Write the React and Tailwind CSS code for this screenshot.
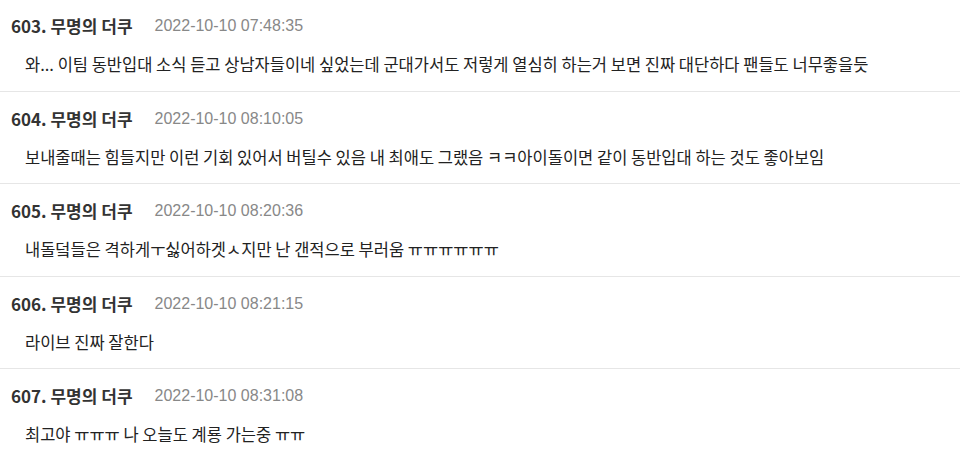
import React from "react";

const rows = [
  { n: "603.", d: "2022-10-10 07:48:35", t: "와... 이팀 동반입대 소식 듣고 상남자들이네 싶었는데 군대가서도 저렇게 열심히 하는거 보면 진짜 대단하다 팬들도 너무좋을듯" },
  { n: "604.", d: "2022-10-10 08:10:05", t: "보내줄때는 힘들지만 이런 기회 있어서 버틸수 있음 내 최애도 그랬음 ㅋㅋ아이돌이면 같이 동반입대 하는 것도 좋아보임" },
  { n: "605.", d: "2022-10-10 08:20:36", t: "내돌덬들은 격하게ㅜ싫어하겟ㅅ지만 난 갠적으로 부러움 ㅠㅠㅠㅠㅠㅠ" },
  { n: "606.", d: "2022-10-10 08:21:15", t: "라이브 진짜 잘한다" },
  { n: "607.", d: "2022-10-10 08:31:08", t: "최고야 ㅠㅠㅠ 나 오늘도 계룡 가는중 ㅠㅠ" },
];

const kr = { fontFamily: '"Noto Sans CJK KR", "Noto Sans", sans-serif' };
const lat = { fontFamily: '"Liberation Sans", Arial, sans-serif' };

export default function App() {
  return (
    <div className="w-[960px] h-[461px] overflow-hidden bg-white">
      {rows.map((r, i) => (
        <div
          key={r.n}
          className={`pb-[15.5px] ${i === rows.length - 1 ? "" : "border-b border-[#e6e6e6]"} ${i === 0 ? "pt-[16px]" : "pt-[17px]"}`}
        >
          <div className="flex items-center h-5 pl-[11px]">
            <span className="text-[17px] font-bold text-[#333333] leading-5" style={kr}>
              {r.n} 무명의 더쿠
            </span>
            <span className="ml-[22px] text-[16px] text-[#888888] leading-5" style={lat}>
              {r.d}
            </span>
          </div>
          <div className="mt-[17px] h-[22px] leading-[22px] pl-[25px] text-[16.5px] text-[#222222] whitespace-nowrap" style={kr}>
            {r.t}
          </div>
        </div>
      ))}
    </div>
  );
}
